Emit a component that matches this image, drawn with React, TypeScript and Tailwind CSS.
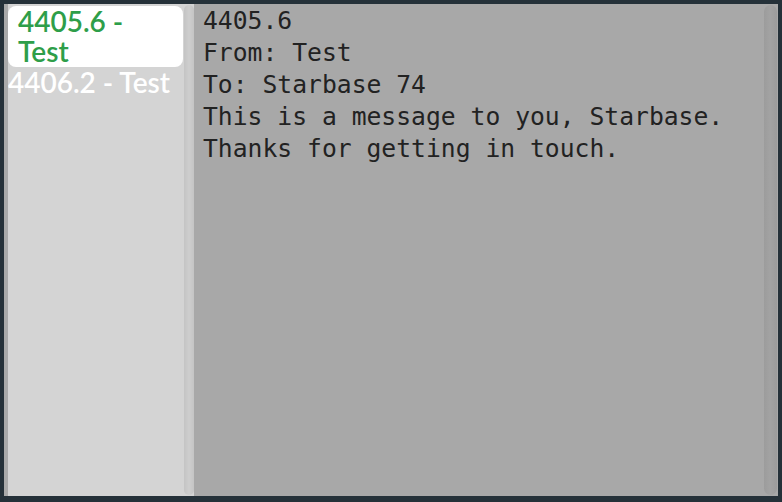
export default function App() {
  const lines = [
    "4405.6",
    "From: Test",
    "To: Starbase 74",
    "This is a message to you, Starbase.",
    "Thanks for getting in touch.",
  ];

  return (
    <div className="w-[782px] h-[502px] bg-[#253139] pt-[4px] pl-[4px] pr-[4px] pb-[6px] flex overflow-hidden">
      {/* Left list */}
      <div className="w-[190px] h-full flex bg-[#a9a9a9] pl-[4px]">
        <div className="flex-1 bg-[#d4d4d4] pt-[2px] overflow-hidden font-['Lato',sans-serif]">
          <div className="bg-white rounded-[8px] pl-[10px] pr-[6px] pt-0 pb-[1px] text-[#2e9e49] text-[28px] leading-[30px] font-semibold">
            4405.6 -
            <br />
            Test
          </div>
          <div className="text-white text-[28px] leading-[30px] font-semibold whitespace-nowrap">
            4406.2 - Test
          </div>
        </div>
        <div className="w-[11px] bg-[#d4d4d4] flex justify-center py-[1px]">
          <div className="w-[10px] h-full rounded-full bg-gradient-to-r from-[#c4c4c4] via-[#cecece] to-[#c4c4c4]" />
        </div>
      </div>

      {/* Message pane */}
      <div className="flex-1 h-full bg-[#a8a8a8] flex">
        <div className="flex-1 pl-[9px] pt-[1px] font-['DejaVu_Sans_Mono',monospace] text-[24.7px] leading-[32px] text-[#222222]">
          {lines.map((l) => (
            <div key={l} className="whitespace-pre">
              {l}
            </div>
          ))}
        </div>
        <div className="w-[14px] flex py-[1px]">
          <div className="w-[13px] h-full rounded-full bg-gradient-to-r from-[#9c9c9c] via-[#a3a3a3] to-[#9c9c9c]" />
        </div>
      </div>
    </div>
  );
}
